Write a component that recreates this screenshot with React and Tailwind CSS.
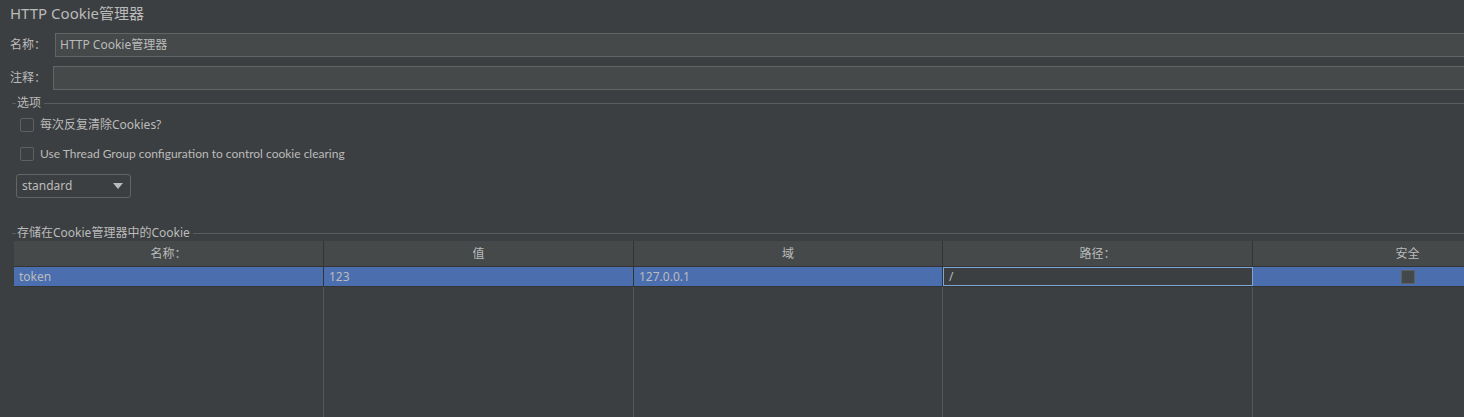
const FONT = { fontFamily: '"Noto Sans", "Noto Sans CJK SC", sans-serif' };

const COLUMNS = [
  { title: '名称：', w: 'w-[310px]' },
  { title: '值', w: 'w-[310px]' },
  { title: '域', w: 'w-[309px]' },
  { title: '路径：', w: 'w-[310px]' },
  { title: '安全', w: 'w-[310px]' },
];

function Legend({ title, className }) {
  return (
    <div className={`flex items-center h-4 ${className}`}>
      <div className="w-[4px] h-px bg-[#5a5d5f] ml-[12px]" />
      <span className="px-[1px] text-[12px] leading-4 text-[#bbbbbb] whitespace-nowrap">{title}</span>
      <div className="flex-1 h-px bg-[#5a5d5f] ml-[2px]" />
    </div>
  );
}

function Checkbox({ label, className, labelClass = '' }) {
  return (
    <div className={`flex items-center h-[14px] pl-[20px] ${className}`}>
      <div className="w-[14px] h-[14px] rounded-[2px] border border-[#5e6163] bg-[#3c3f41]" />
      <span className={`ml-[6px] text-[12px] text-[#bbbbbb] whitespace-nowrap ${labelClass}`}>{label}</span>
    </div>
  );
}

export default function App() {
  return (
    <div className="w-[1464px] h-[417px] overflow-hidden bg-[#3c3f41] text-[#bbbbbb] flex flex-col" style={FONT}>
      {/* title */}
      <div className="h-[27px] pl-[10px] pt-[3px] text-[15px] leading-5 text-[#bbbbbb] whitespace-nowrap">HTTP Cookie管理器</div>

      <div className="flex items-center h-[24px] mt-[6px]">
        <span className="w-[55px] shrink-0 pl-[10px] text-[12px]">名称：</span>
        <div className="w-[1500px] shrink-0 h-full flex items-center border border-[#646464] bg-[#45494a] pl-[4px] text-[12px] whitespace-nowrap">HTTP Cookie管理器</div>
      </div>
      <div className="flex items-center h-[24px] mt-[9px]">
        <span className="w-[53px] shrink-0 pl-[10px] text-[12px]">注释：</span>
        <div className="w-[1500px] shrink-0 h-full border border-[#646464] bg-[#45494a]" />
      </div>

      <Legend title="选项" className="mt-[5px]" />
      <Checkbox label="每次反复清除Cookies?" className="mt-[7px]" />
      <Checkbox
        label="Use Thread Group configuration to control cookie clearing"
        className="mt-[15px]"
        labelClass="font-['Lato',sans-serif] text-[12.5px]"
      />

      <div className="ml-[16px] mt-[13px] w-[115px] h-[24px] flex items-center justify-between border border-[#646464] rounded-[3px] bg-[#3c3f41] pl-[5px] pr-[7px]">
        <span className="text-[12px]">standard</span>
        <svg width="10" height="6" viewBox="0 0 10 6"><path d="M0 0 H10 L5 6 Z" fill="#bbbbbb" /></svg>
      </div>

      <Legend title="存储在Cookie管理器中的Cookie" className="mt-[27px]" />

      {/* table */}
      <div className="ml-[14px] flex-1 flex flex-col overflow-hidden">
        <div className="flex h-[26px] bg-[#45494a] border-b border-[#323436]">
          {COLUMNS.map((c, i) => (
            <div key={i} className={`${c.w} shrink-0 flex items-center justify-center text-[12px] border-r border-[#323436]`}>{c.title}</div>
          ))}
        </div>
        <div className="flex h-[20px] bg-[#4b6eaf] border-b border-[#323436] text-[12px]">
          <div className="w-[310px] shrink-0 flex items-center pl-[5px] border-r border-[#323436]">token</div>
          <div className="w-[310px] shrink-0 flex items-center pl-[5px] border-r border-[#323436]">123</div>
          <div className="w-[309px] shrink-0 flex items-center pl-[5px] border-r border-[#323436]">127.0.0.1</div>
          <div className="w-[310px] shrink-0 flex items-center pl-[5px] border border-[#7da6d4] bg-[#3c3f41]">/</div>
          <div className="w-[310px] shrink-0 flex items-center justify-center">
            <div className="w-[14px] h-[14px] border border-[#5e6163] bg-[#43494a]" />
          </div>
        </div>
        <div className="flex flex-1">
          {COLUMNS.map((c, i) => (
            <div key={i} className={`${c.w} shrink-0 border-r border-[#55585a]`} />
          ))}
        </div>
      </div>
    </div>
  );
}
